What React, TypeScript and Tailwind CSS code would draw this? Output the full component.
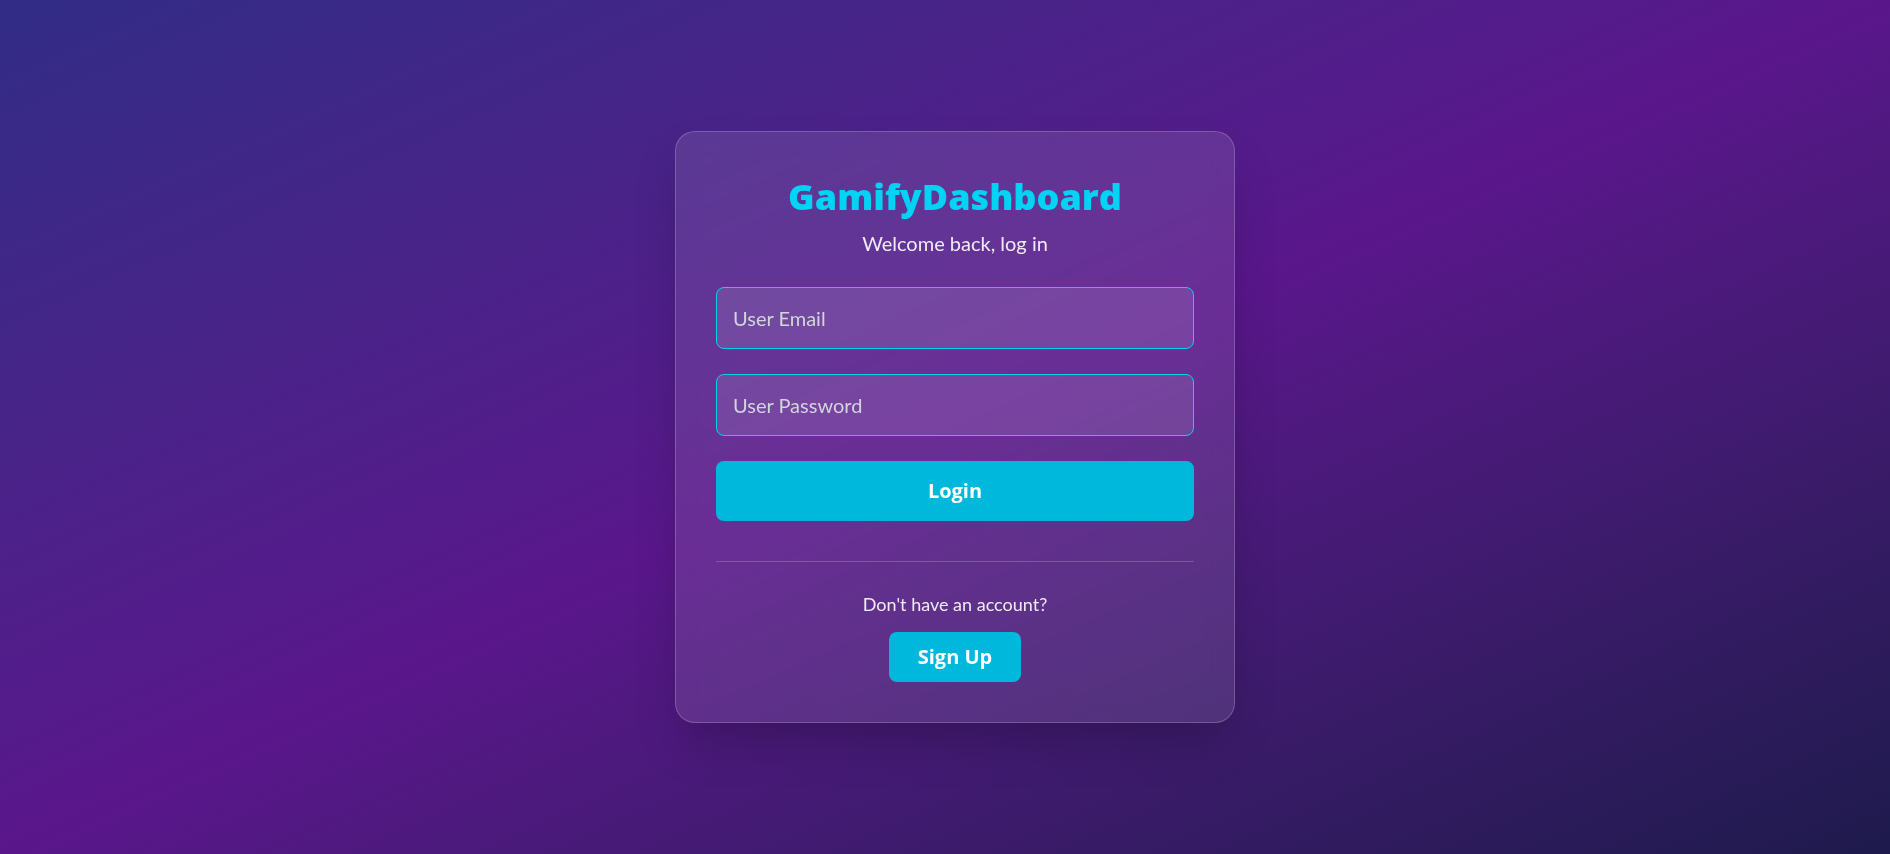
export default function App() {
  return (
    <div className="min-h-screen w-full bg-gradient-to-br from-indigo-900 via-purple-900 to-indigo-950 flex items-center justify-center pl-5 font-['Lato',sans-serif]">
      <div className="w-[560px] rounded-[20px] border border-white/20 bg-white/10 backdrop-blur-md px-10 pt-[45px] pb-10 shadow-2xl">
        {/* HEADER */}
        <div className="text-center">
          <h1 className="text-4xl font-extrabold text-cyan-400 leading-10 font-['Open_Sans',sans-serif]">
            GamifyDashboard
          </h1>
          <p className="mt-3 text-xl text-white/90">Welcome back, log in</p>
        </div>

        {/* FORM */}
        <form className="mt-[30px] flex flex-col gap-[25px]">
          <input
            type="email"
            placeholder="User Email"
            className="h-[62px] w-full rounded-lg border border-cyan-400 bg-white/10 px-4 text-xl text-white placeholder:text-gray-300 outline-none"
          />
          <input
            type="password"
            placeholder="User Password"
            className="h-[62px] w-full rounded-lg border border-cyan-400 bg-white/10 px-4 text-xl text-white placeholder:text-gray-300 outline-none"
          />
          <button
            type="button"
            className="h-[60px] w-full rounded-lg bg-cyan-500 text-xl font-bold text-white font-['Open_Sans',sans-serif]"
          >
            Login
          </button>
        </form>

        <div className="mt-10 border-t border-white/20" />

        {/* SIGN UP */}
        <div className="mt-[28px] flex flex-col items-center">
          <p className="text-lg text-white/90">Don't have an account?</p>
          <button
            type="button"
            className="mt-[14px] h-[50px] w-[132px] rounded-lg bg-cyan-500 text-xl font-bold text-white font-['Open_Sans',sans-serif]"
          >
            Sign Up
          </button>
        </div>
      </div>
    </div>
  );
}
